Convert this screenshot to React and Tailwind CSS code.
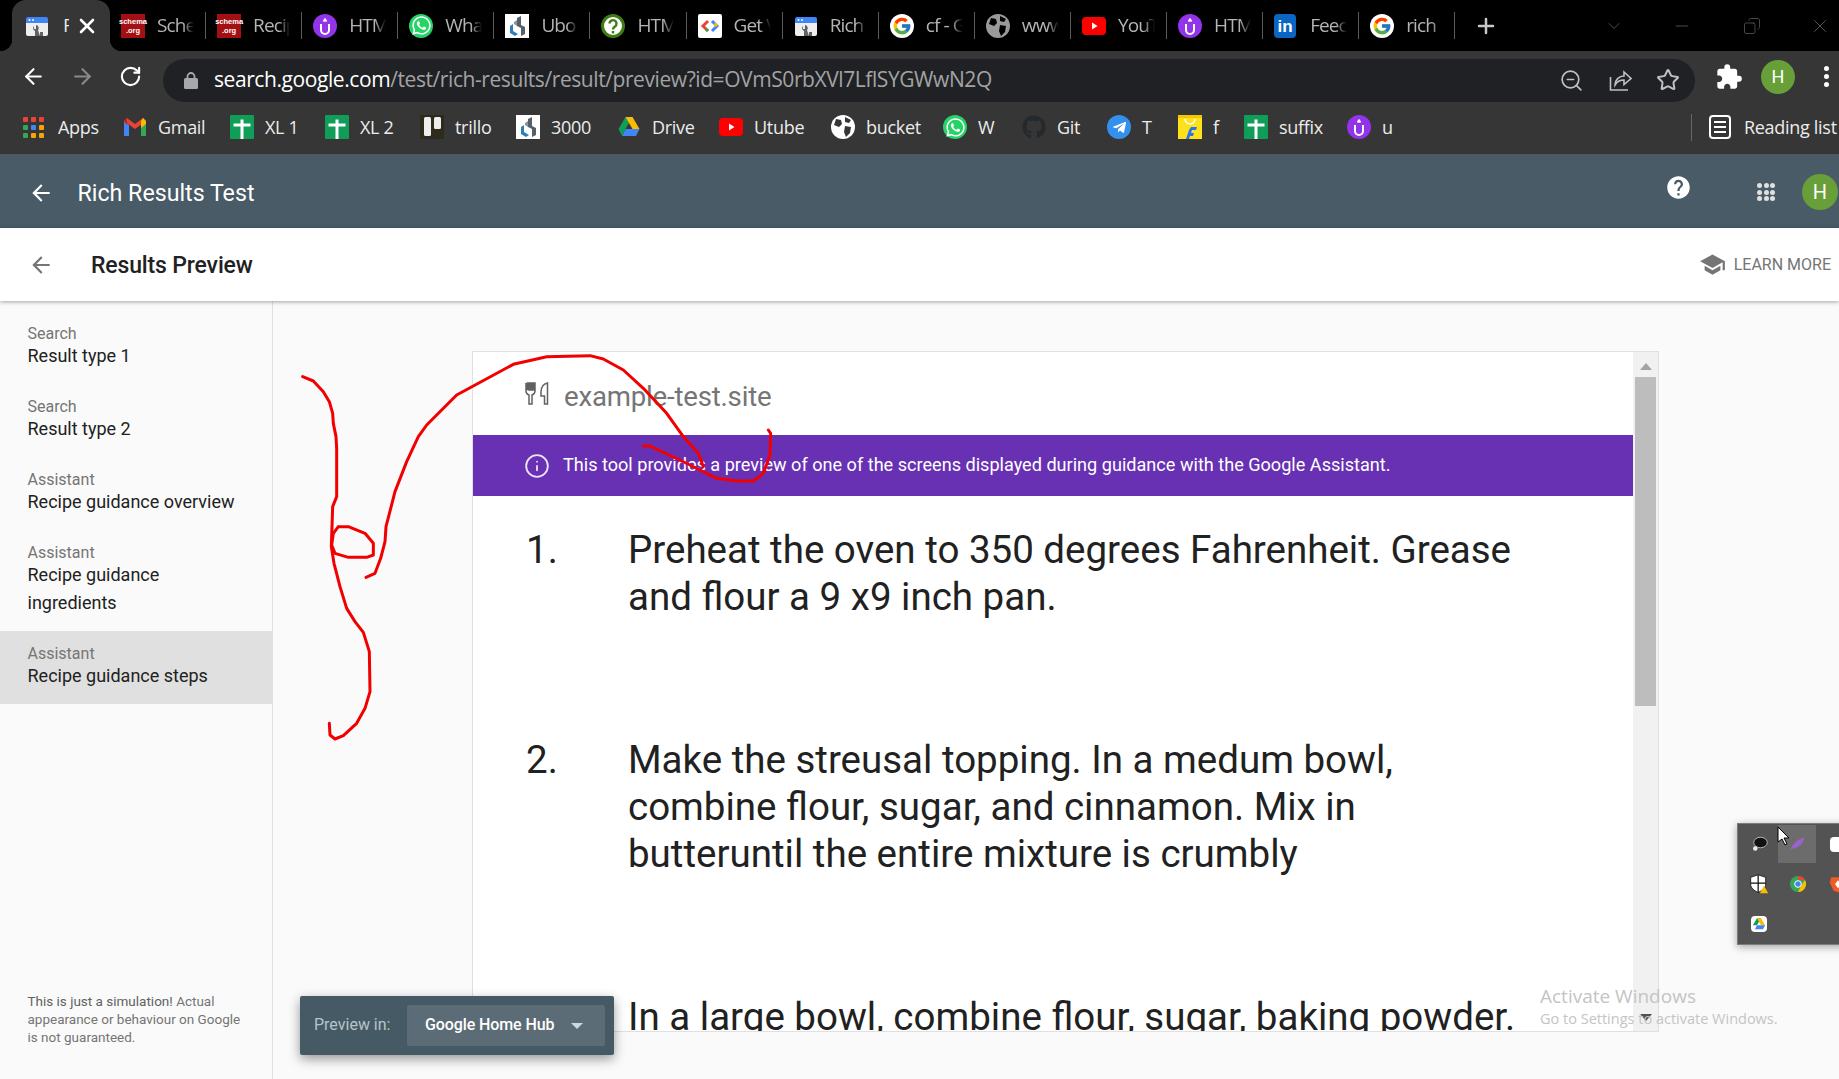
import React from 'react';
import { ArrowLeft, ArrowRight, RotateCw, ZoomOut, Star, Plus, Minus, ChevronDown, Copy, X, Info } from 'lucide-react';
import { MdSchool, MdExtension, MdHelp, MdArrowBack } from 'react-icons/md';
import { FaWhatsapp, FaGithub, FaTelegramPlane } from 'react-icons/fa';
import { FcGoogle } from 'react-icons/fc';

const Schema = () => (
  <div className="w-6 h-6 bg-[#a30f12] flex flex-col items-center justify-center text-white text-[7.5px] leading-[9px] font-bold shrink-0 font-['Liberation_Sans',sans-serif]">
    <span>schema</span><span>.org</span>
  </div>
);
const Uber = () => (
  <svg viewBox="0 0 24 24" className="w-6 h-6 shrink-0">
    <circle cx="12" cy="12" r="12" fill="#9333ea" />
    <path d="M8 10v6a4 4 0 0 0 8 0v-6M10.5 7.5 12 5.5l1.500 2" fill="none" stroke="#fff" strokeWidth="2" />
  </svg>
);
const Whats = () => (
  <div className="w-6 h-6 rounded-full bg-[#25d366] flex items-center justify-center shrink-0 text-white"><FaWhatsapp size={21} /></div>
);
const Ubo = () => (
  <svg viewBox="0 0 24 24" className="w-6 h-6 shrink-0">
    <rect width="24" height="24" fill="#fff" />
    <path d="M5 12v7l5 3 3-2-5-3v-7z" fill="#2d7fb8" />
    <path d="M12 4l4-2v9l4 2v7l-4 2v-8l-4-2z" fill="#55606a" />
    <path d="M9 8l3-2v6l-3-2z" fill="#8a949c" />
  </svg>
);
const HelpGreen = () => (
  <svg viewBox="0 0 24 24" className="w-6 h-6 shrink-0">
    <circle cx="12" cy="12" r="10.500" fill="#fff" stroke="#3f7d12" strokeWidth="3" />
    <path d="M8.500 9.500a3.500 3.500 0 1 1 5.500 3c-1.300.9-2 1.500-2 3M12 17v2.500" fill="none" stroke="#3f7d12" strokeWidth="2.400" />
  </svg>
);
const GetIcon = () => (
  <svg viewBox="0 0 24 24" className="w-6 h-6 shrink-0">
    <rect width="24" height="24" rx="2" fill="#fff" />
    <path d="M10 7l-5 5 5 5" fill="none" stroke="#ea4335" strokeWidth="3" />
    <path d="M14 7l5 5-5 5" fill="none" stroke="#4285f4" strokeWidth="3" />
    <path d="M10 17l-2-2" stroke="#34a853" strokeWidth="3" />
    <path d="M19 12l-2.500-2.500" stroke="#fbbc04" strokeWidth="3" />
  </svg>
);
const Rich = () => (
  <svg viewBox="0 0 24 20" className="w-6 h-5 shrink-0">
    <path d="M1 7h22v11a2 2 0 0 1-2 2H3a2 2 0 0 1-2-2z" fill="#efefef" />
    <path d="M1 7V3a2 2 0 0 1 2-2h18a2 2 0 0 1 2 2v4z" fill="#4285f4" />
    <circle cx="4.500" cy="4" r="1" fill="#fff" /><circle cx="8" cy="4" r="1" fill="#fff" />
    <path d="M10 20v-5a3 3 0 0 1-1-5v3h2v-4a3 3 0 0 1 2 5l2 6zM15 20v-4h3v4z" fill="#5f6368" />
  </svg>
);
const Goog = () => (
  <div className="w-6 h-6 rounded-full bg-white flex items-center justify-center shrink-0"><FcGoogle size={20} /></div>
);
const Globe = ({ dim }) => (
  <svg viewBox="0 0 24 24" className="w-6 h-6 shrink-0">
    <circle cx="12" cy="12" r="12" fill={dim ? '#9a9a9a' : '#fff'} />
    <path d="M5 4l5 1 1 4-3 3-5-2zM14 11l6 1-1 6-4 4-2-5zM14 2l6 3-2 3-4-1z" fill={dim ? '#000' : '#363636'} />
  </svg>
);
const YT = () => (
  <svg viewBox="0 0 24 24" className="w-6 h-6 shrink-0">
    <rect y="3" width="24" height="18" rx="4" fill="#f00" />
    <path d="M10 8.500v7l5.500-3.500z" fill="#fff" />
  </svg>
);
const LinkedIn = () => (
  <div className="w-[22px] h-6 mr-0.5 bg-[#0a66c2] rounded-sm flex items-end justify-center text-white font-bold text-[17px] leading-[22px] shrink-0 font-['Liberation_Sans',sans-serif]">in</div>
);
const Sheet = () => (
  <svg viewBox="0 0 24 24" className="w-6 h-6 shrink-0">
    <rect width="24" height="24" rx="1" fill="#0f9d58" />
    <path d="M12 4.500V24M3.500 10H20.500" stroke="#fff" strokeWidth="3" />
  </svg>
);
const Trello = () => (
  <svg viewBox="0 0 24 24" className="w-6 h-6 shrink-0">
    <rect width="24" height="24" fill="#2e2a1c" />
    <rect x="4" y="2" width="7" height="19" rx="1.500" fill="#eee" />
    <rect x="14" y="2" width="7" height="12" rx="1.500" fill="#eee" />
  </svg>
);
const Gmail = () => (
  <svg viewBox="0 0 24 24" className="w-6 h-6 shrink-0">
    <path d="M1 6v15h5V10z" fill="#4285f4" />
    <path d="M23 6v15h-5V10z" fill="#34a853" />
    <path d="M1 6l11 8 11-8-3-3-8 6-8-6z" fill="#ea4335" />
    <path d="M20 3l3 3v3l-5 4V6z" fill="#fbbc04" />
    <path d="M1 6l3-3v7z" fill="#c5221f" />
  </svg>
);
const Drive = () => (
  <svg viewBox="0 0 24 24" className="w-6 h-6 shrink-0">
    <path d="M8.500 2h7l-7 12H1.500z" fill="#0f9d58" />
    <path d="M15.500 2l7 12h-7l-7-12z" fill="#fbbc04" />
    <path d="M5 21l3.500-7h14l-3.500 7z" fill="#4285f4" />
    <path d="M1.500 14h7l-3.500 7z" fill="#0f9d58" />
  </svg>
);
const AppsIcon = () => {
  const c = ['#ea4335', '#ea4335', '#ea4335', '#34a853', '#4285f4', '#f5a50a', '#34a853', '#f5a50a', '#f5a50a'];
  return (
    <div className="w-6 h-6 shrink-0 py-[2px] pr-[3px]">
      <div className="w-[21px] h-[21px] grid grid-cols-3 gap-[3px]">
        {c.map((x, i) => <div key={i} className="rounded-[1px]" style={{ background: x }} />)}
      </div>
    </div>
  );
};
const Tele = () => (
  <div className="w-6 h-6 rounded-full bg-[#3390ec] flex items-center justify-center text-white shrink-0"><FaTelegramPlane size={15} /></div>
);
const Flip = () => (
  <svg viewBox="0 0 24 24" className="w-6 h-6 shrink-0">
    <rect y="2" width="24" height="22" fill="#ffe11b" />
    <rect y="0" width="24" height="3" fill="#f7c600" />
    <path d="M7 4a5 5 0 0 0 10 0" fill="none" stroke="#fff" strokeWidth="1.500" />
    <path d="M13 12h6l-1 3h-4l-1 3h3l-1 3h-3l-1 3H8l3-9z" fill="#2874f0" />
  </svg>
);
const GitI = () => <div className="w-6 h-6 text-[#24292e] flex items-center shrink-0"><FaGithub size={24} /></div>;

const tabs = [
  [Schema, 'Sche'], [Schema, 'Recip'], [Uber, 'HTM'], [Whats, 'Wha'], [Ubo, 'Ubo'], [HelpGreen, 'HTM'],
  [GetIcon, 'Get V'], [Rich, 'Rich'], [Goog, 'cf - G'], [Globe, 'www', true], [YT, 'YouT'], [Uber, 'HTM'], [LinkedIn, 'Feec'], [Goog, 'rich'],
];

const marks = [
  [AppsIcon, 'Apps', 'w-[100px]'], [Gmail, 'Gmail', 'w-[107px]'], [Sheet, 'XL 1', 'w-[95px]'], [Sheet, 'XL 2', 'w-[95px]'],
  [Trello, 'trillo', 'w-[96px]'], [Ubo, '3000', 'w-[101px]'], [Drive, 'Drive', 'w-[102px]'], [YT, 'Utube', 'w-[112px]'],
  [Globe, 'bucket', 'w-[112px]'], [Whats, 'W', 'w-[79px]'], [GitI, 'Git', 'w-[85px]'], [Tele, 'T', 'w-[71px]'], [Flip, 'f', 'w-[66px]'],
  [Sheet, 'suffix', 'w-[103px]'], [Uber, 'u', 'w-[344px]'],
];

const nav = [
  ['Search', ['Result type 1']],
  ['Search', ['Result type 2']],
  ['Assistant', ['Recipe guidance overview']],
  ['Assistant', ['Recipe guidance', 'ingredients']],
  ['Assistant', ['Recipe guidance steps'], true],
];

const steps = [
  ['1.', ['Preheat the oven to 350 degrees Fahrenheit. Grease', 'and flour a 9 x9 inch pan.']],
  ['2.', ['Make the streusal topping. In a medum bowl,', 'combine flour, sugar, and cinnamon. Mix in', 'butteruntil the entire mixture is crumbly']],
  ['', ['In a large bowl, combine flour, sugar, baking powder.']],
];

const scribble = [
  [[38,95],[70,108],[100,140],[118,170],[128,205],[130,235],[138,275],[140,310],[140,455],[128,485],[124,605],[132,655],[150,725],[170,790],[195,830],[220,862],[238,920],[240,1040],[225,1090],[200,1135],[160,1172],[135,1182],[120,1170],[118,1135]],
  [[145,545],[175,545],[225,565],[250,595],[250,630],[230,637],[175,637],[135,625],[125,600],[130,565],[145,545]],
  [[228,697],[255,685],[272,640],[285,590],[288,545],[315,440],[350,350],[385,275],[410,240],[500,150],[670,58],[770,35],[900,32],[940,42],[1000,75],[1060,130],[1130,205],[1180,275],[1225,325],[1240,365]],
  [[1060,303],[1080,303],[1200,360],[1280,400],[1340,408],[1390,408],[1420,385],[1440,330],[1442,265],[1435,255]],
];
const toPoints = (pts) => pts.map(([x, y]) => `${290 + x / 3},${345 + y / 3}`).join(' ');

export default function App() {
  return (
    <div className="relative w-[1839px] h-[1079px] overflow-hidden bg-[#fafafa] font-['Roboto',sans-serif] flex flex-col">
      {/* tab strip */}
      <div className="h-[51px] bg-black flex items-stretch pl-[12px] shrink-0">
        <div className="relative w-[98px] bg-[#363636] rounded-t-[14px] flex items-center pl-[13px] shrink-0">
          <div className="absolute bottom-0 -left-3 w-3 h-3 bg-[radial-gradient(circle_at_0_0,#000_12px,#363636_12.5px)]" />
          <div className="absolute bottom-0 -right-3 w-3 h-3 bg-[radial-gradient(circle_at_100%_0,#000_12px,#363636_12.5px)]" />
          <Rich />
          <span className="ml-[14px] w-[6px] overflow-hidden text-[#e8e8e8] text-[19px] font-['Open_Sans',sans-serif] leading-none">R</span>
          <X size={24} strokeWidth={2.6} className="text-white ml-[6px]" />
        </div>
        {tabs.map(([Icon, t, dim], i) => (
          <div key={i} className="w-[96.100px] flex items-center pl-[11px] shrink-0">
            <Icon dim={dim} />
            <span className="ml-[12px] w-[37px] overflow-hidden whitespace-nowrap text-[#b4b4b4] text-[19px] tracking-[-0.9px] font-['Open_Sans',sans-serif] [mask-image:linear-gradient(to_right,#000_70%,transparent)]">{t}</span>
            <div className="ml-auto w-px h-[27px] bg-[#5a5a5a]" />
          </div>
        ))}
        <div className="w-[60.400px] flex items-center justify-center shrink-0 text-[#c8c8c8]"><Plus size={24} strokeWidth={2.5} /></div>
        <div className="flex items-center text-[#5c5c5c] pl-[88px]">
          <ChevronDown size={20} strokeWidth={1} />
          <Minus size={20} strokeWidth={1} className="ml-[48px]" />
          <Copy size={18} strokeWidth={1} className="scale-x-[-1] ml-[51px]" />
          <X size={22} strokeWidth={1} className="ml-[48px]" />
        </div>
      </div>
      {/* toolbar */}
      <div className="h-[51px] bg-[#363636] flex items-center pl-[21px] shrink-0">
        <ArrowLeft size={25} className="text-white" />
        <ArrowRight size={25} className="text-[#8a8a8a] ml-[24px]" />
        <RotateCw size={23} strokeWidth={2.2} className="text-white ml-[24px]" />
        <div className="ml-[21px] w-[1532px] h-[43px] mt-[7px] rounded-full bg-[#202124] flex items-center pl-[21px] pr-[15px]">
          <svg viewBox="0 0 14 17" className="w-[14px] h-[17px] shrink-0">
            <path d="M3.500 7V4.500a3.500 3.500 0 0 1 7 0V7" fill="none" stroke="#a8a8ac" strokeWidth="1.800" />
            <rect y="6" width="14" height="11" rx="1.500" fill="#a8a8ac" />
          </svg>
          <span className="ml-[16px] text-[21px] tracking-[-0.42px] whitespace-nowrap font-['Open_Sans',sans-serif] text-white">search.google.com<span className="text-[#a3a3a3]">/test/rich-results/result/preview?id=OVmS0rbXVl7LflSYGWwN2Q</span></span>
          <div className="ml-auto flex items-center gap-[24px] text-[#c0c0c0]">
            <ZoomOut size={25} strokeWidth={1.6} />
            <svg viewBox="0 0 24 24" className="w-6 h-6" fill="none" stroke="currentColor" strokeWidth="1.600">
              <path d="M2.500 9v13H20" />
              <path d="M7 17c0-5 4-9 9-9V4l7 6.500-7 6V12c-4 0-7 1.500-9 5z" />
            </svg>
            <Star size={24} strokeWidth={2} />
          </div>
        </div>
        <MdExtension size={28} className="text-white ml-[20px]" />
        <div className="ml-[18px] w-[34px] h-[34px] rounded-full bg-[#689f38] text-white text-[18px] flex items-center justify-center">H</div>
        <div className="ml-[29px] flex flex-col gap-[3px]">
          <div className="w-[5px] h-[5px] rounded-full bg-white" />
          <div className="w-[5px] h-[5px] rounded-full bg-white" />
          <div className="w-[5px] h-[5px] rounded-full bg-white" />
        </div>
      </div>
      {/* bookmarks */}
      <div className="h-[53px] bg-[#363636] flex items-center pl-[23px] pb-[2px] shrink-0 border-b border-[#555]">
        {marks.map(([Icon, t, w], i) => (
          <div key={i} className={`${w} flex items-center gap-[11px] shrink-0`}>
            <Icon />
            <span className="text-[18px] text-[#ececec] font-['Open_Sans',sans-serif] tracking-[-0.3px]">{t}</span>
          </div>
        ))}
        <div className="w-px h-[27px] bg-[#666]" />
        <div className="ml-[17px] w-[22px] h-6 border-2 border-white rounded-sm flex flex-col justify-center gap-[3px] px-[3px] shrink-0">
          <div className="h-[2px] bg-white" /><div className="h-[2px] bg-white" /><div className="h-[2px] bg-white" />
        </div>
        <span className="ml-[13px] text-[18px] text-[#ececec] font-['Open_Sans',sans-serif] tracking-[-0.3px] whitespace-nowrap">Reading list</span>
      </div>
      {/* app bar */}
      <div className="h-[73px] bg-[#485b66] flex items-center pl-[28px] shrink-0">
        <MdArrowBack size={26} className="text-white mt-[2px]" />
        <span className="ml-[23.500px] mt-[3.500px] text-[23.200px] text-white">Rich Results Test</span>
        <div className="ml-auto flex items-start h-full">
          <MdHelp size={27} className="text-white mt-[19px]" />
          <div className="ml-[65px] mt-[28px] w-[18px] h-[18px] grid grid-cols-3 gap-[1.500px]">
            {[0, 1, 2, 3, 4, 5, 6, 7, 8].map((d) => <div key={d} className="rounded-full bg-[#e0e0e0]" />)}
          </div>
          <div className="ml-[27px] mr-[1px] mt-[19px] w-[36px] h-[36px] rounded-full bg-[#689f38] text-white text-[20px] flex items-center justify-center">H</div>
        </div>
      </div>
      {/* sub bar */}
      <div className="h-[73px] bg-white flex items-center pl-[28px] pr-[8px] shrink-0 shadow-[0_1px_4px_rgba(0,0,0,0.35)] z-10">
        <MdArrowBack size={26} className="text-[#757575]" />
        <span className="ml-[37px] mt-[3px] text-[23px] font-medium text-[#212121] tracking-[-0.15px]">Results Preview</span>
        <div className="ml-auto flex items-center text-[#757575]">
          <MdSchool size={27} />
          <span className="ml-[8px] text-[16px]">LEARN MORE</span>
        </div>
      </div>
      <div className="flex flex-1 min-h-0">
        {/* sidebar */}
        <div className="w-[273px] border-r border-[#e0e0e0] pt-[10px] flex flex-col shrink-0">
          {nav.map(([a, lines, on], i) => (
            <div key={i} className={`pt-[14px] pb-[14px] pl-[27.500px] ${on ? 'bg-[#e0e0e0]' : ''}`}>
              <div className="text-[16px] leading-[17px] text-[#757575]">{a}</div>
              {lines.map((l) => <div key={l} className="text-[18px] leading-[28px] text-[#212121]">{l}</div>)}
            </div>
          ))}
          <div className="mt-auto pl-[27.500px] pb-[33px] text-[13.500px] leading-[18px] text-[#757575]">
            <div><span className="text-[#616161]">This is just a simulation!</span> Actual</div>
            <div>appearance or behaviour on Google</div>
            <div>is not guaranteed.</div>
          </div>
        </div>
        {/* main */}
        <div className="flex-1 pl-[199px] pt-[50px]">
          <div className="w-[1187px] h-[681px] border border-[#e0e0e0] bg-white flex overflow-hidden">
            <div className="w-[1160px] flex flex-col shrink-0">
              <div className="h-[83px] flex items-center pl-[52px] shrink-0">
                <svg viewBox="0 0 24 23" className="w-6 h-[23px] shrink-0" fill="none" stroke="#616161" strokeWidth="1.500">
                  <path d="M1 1v8c0 2 1.500 3.500 3 4v9h3v-9c1.500-.5 3-2 3-4V1H8.500v7H7V1H5.500v7H4V1H2.500v7z" />
                  <path d="M22.500 1C18 2 16 5 16 10v4h3.500v8h3z" />
                </svg>
                <span className="ml-[15px] mt-[6px] text-[27.600px] text-[#757575] tracking-[-0.2px]">example-test.site</span>
              </div>
              <div className="h-[61px] bg-[#6831b3] flex items-center pl-[51px] text-white shrink-0">
                <Info size={26} strokeWidth={1.7} className="text-[#ece3f7]" />
                <span className="ml-[13px] mb-[1px] text-[18.100px]">This tool provides a preview of one of the screens displayed during guidance with the Google Assistant.</span>
              </div>
              <div className="pl-[53px] pt-[30px]">
                {steps.map(([n, lines], i) => (
                  <div key={i} className="flex mb-[116px] text-[38.500px] leading-[47px] text-[#212121]">
                    <div className="w-[102px] shrink-0">{n}</div>
                    <div>{lines.map((l) => <div key={l} className="whitespace-nowrap">{l}</div>)}</div>
                  </div>
                ))}
              </div>
            </div>
            <div className="w-[25px] bg-[#f1f1f1] flex flex-col items-center shrink-0">
              <div className="w-0 h-0 mt-[11px] border-x-[6px] border-x-transparent border-b-[7px] border-b-[#a3a3a3]" />
              <div className="w-[21px] h-[329px] mt-[7px] bg-[#bdbdbd]" />
              <div className="w-0 h-0 mt-auto mb-[10px] border-x-[6px] border-x-transparent border-t-[7px] border-t-[#505050]" />
            </div>
          </div>
        </div>
      </div>

      {/* floating preview selector */}
      <div className="absolute left-[300px] top-[996px] w-[314px] h-[59px] bg-[#455a64] rounded-[2px] shadow-[0_4px_12px_rgba(0,0,0,0.4)] flex items-center pl-[14px] pr-[9px]">
        <span className="text-[16px] text-[#b8c4ca] mb-[2px]">Preview in:</span>
        <div className="ml-auto w-[198px] h-[41px] bg-[#5b6c76] rounded-[2px] flex items-center pl-[18px] text-white">
          <span className="text-[16px] font-medium tracking-[-0.1px] mb-[2px]">Google Home Hub</span>
          <div className="ml-[17px] w-0 h-0 border-x-[6px] border-x-transparent border-t-[6px] border-t-[#cfd8dc]" />
        </div>
      </div>

      {/* red scribble */}
      <svg className="absolute inset-0 pointer-events-none" width="1839" height="1079" fill="none" stroke="#f20000" strokeWidth="3" strokeLinecap="round" strokeLinejoin="round">
        {scribble.map((pts, i) => <polyline key={i} points={toPoints(pts)} />)}
      </svg>

      {/* system tray flyout */}
      <div className="absolute left-[1737px] top-[823px] w-[120px] h-[122px] bg-[#535353] border border-[#7c7c7c] shadow-[0_2px_8px_rgba(0,0,0,0.35)] grid grid-cols-3 grid-rows-3 pl-[2px]">
        <div className="flex items-center justify-center">
          <svg viewBox="0 0 24 24" className="w-[18px] h-[18px]"><ellipse cx="14" cy="10" rx="9" ry="7" fill="#111" stroke="#ddd" /><circle cx="7" cy="18" r="3" fill="#eee" /></svg>
        </div>
        <div className="flex items-center justify-center bg-[#6c6c6c] -ml-[1px] w-[38px] h-[38px] mt-[1px]">
          <svg viewBox="0 0 24 24" className="w-[17px] h-[17px]"><path d="M2 22C6 12 12 5 23 2c-2 10-8 15-18 16z" fill="#9a63c9" /></svg>
        </div>
        <div className="flex items-center justify-start pl-[13px]"><div className="w-[18px] h-[15px] bg-white rounded-sm" /></div>
        <div className="flex items-center justify-center">
          <svg viewBox="0 0 24 24" className="w-[20px] h-[20px]"><path d="M11 1l9 3v8c0 5-4 8-9 10-5-2-9-5-9-10V4z" fill="#fff" stroke="#111" /><path d="M11 1v21M2 11h18" stroke="#111" strokeWidth="1.500" /><path d="M18 14l5 9h-10z" fill="#fbbc04" /></svg>
        </div>
        <div className="flex items-center justify-center">
          <svg viewBox="0 0 24 24" className="w-[16px] h-[16px]"><circle cx="12" cy="12" r="12" fill="#34a853" /><path d="M12 0a12 12 0 0 1 10.400 6H12z" fill="#ea4335" /><path d="M22.400 6A12 12 0 0 1 12 24l5-10z" fill="#fbbc04" /><circle cx="12" cy="12" r="5" fill="#4285f4" stroke="#fff" strokeWidth="1.500" /></svg>
        </div>
        <div className="flex items-center justify-start pl-[12px]">
          <svg viewBox="0 0 24 24" className="w-[18px] h-[18px]"><path d="M3 3h18l2 7-5 11-6 2-6-2L1 10z" fill="#f15a22" /><path d="M12 7l4 5-4 6-4-6z" fill="#fff" /></svg>
        </div>
        <div className="flex items-center justify-center">
          <div className="w-4 h-4 bg-white rounded-sm flex items-center justify-center">
            <svg viewBox="0 0 24 24" className="w-[14px] h-[14px]"><path d="M8.500 2h7l-7 12H1.500z" fill="#0f9d58" /><path d="M15.500 2l7 12h-7l-7-12z" fill="#fbbc04" /><path d="M5 21l3.500-7h14l-3.500 7z" fill="#4285f4" /></svg>
          </div>
        </div>
      </div>

      {/* mouse cursor */}
      <svg className="absolute left-[1777px] top-[826px]" width="14" height="20" viewBox="0 0 14 20"><path d="M1 1v15l4-3 3 6 2-1-3-6h5z" fill="#fff" stroke="#000" /></svg>

      {/* activation watermark */}
      <div className="absolute left-[1540px] top-[983px] font-['Open_Sans',sans-serif] text-[#c4c4c4] pointer-events-none">
        <div className="text-[19px] leading-[26px]">Activate Windows</div>
        <div className="text-[14.500px] leading-[20px] whitespace-nowrap">Go to Settings to activate Windows.</div>
      </div>
    </div>
  );
}
